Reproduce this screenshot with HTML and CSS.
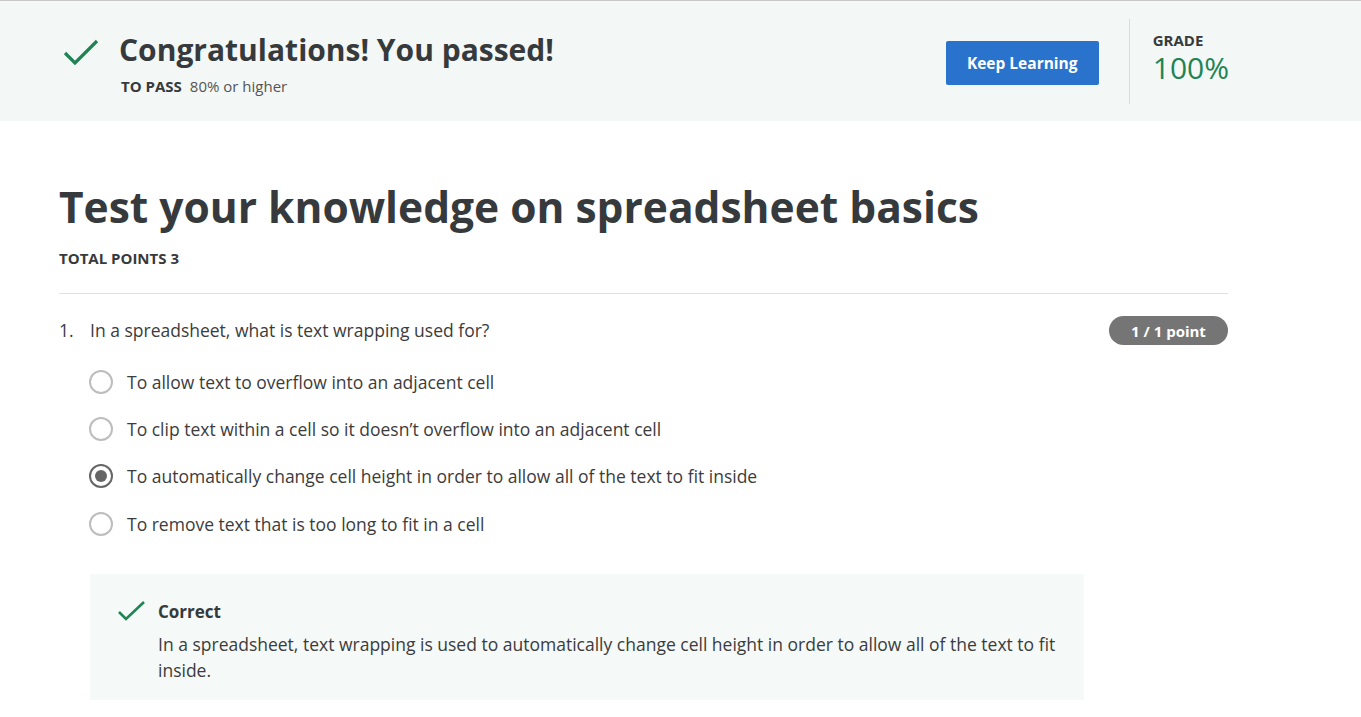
FILE: index.html
```html
<!DOCTYPE html>
<html lang="en">
<head>
<meta charset="utf-8">
<title>Quiz result</title>
<link rel="stylesheet" href="styles.css">
</head>
<body>
<header class="banner">
  <div class="banner-inner">
    <div class="banner-left">
      <svg class="banner-check" width="40" height="30" viewBox="0 0 40 30"><path d="M6 14 L16 24 L38 2" fill="none" stroke="#1f8354" stroke-width="3.2"/></svg>
      <div class="banner-text">
        <h1 class="banner-title">Congratulations! You passed!</h1>
        <div class="banner-sub"><span class="label">TO PASS</span><span class="val">80% or higher</span></div>
      </div>
    </div>
    <div class="banner-right">
      <button class="btn">Keep Learning</button>
      <div class="vdivider"></div>
      <div class="grade">
        <div class="label">GRADE</div>
        <div class="grade-val">100%</div>
      </div>
    </div>
  </div>
</header>
<main class="main">
  <h2 class="quiz-title">Test your knowledge on spreadsheet basics</h2>
  <div class="total">TOTAL POINTS 3</div>
  <hr class="rule">
  <section class="question">
    <div class="q-head">
      <div class="q-text"><span class="q-num">1.</span><span>In a spreadsheet, what is text wrapping used for?</span></div>
      <div class="badge">1 / 1 point</div>
    </div>
    <ul class="options">
      <li class="option"><span class="radio"></span><span>To allow text to overflow into an adjacent cell</span></li>
      <li class="option"><span class="radio"></span><span>To clip text within a cell so it doesn’t overflow into an adjacent cell</span></li>
      <li class="option"><span class="radio checked"></span><span>To automatically change cell height in order to allow all of the text to fit inside</span></li>
      <li class="option"><span class="radio"></span><span>To remove text that is too long to fit in a cell</span></li>
    </ul>
    <div class="feedback">
      <svg class="fb-check" width="30" height="22" viewBox="0 0 30 22"><path d="M3 11 L10 18 L28 1" fill="none" stroke="#1f8354" stroke-width="2.6"/></svg>
      <div class="fb-body">
        <div class="fb-title">Correct</div>
        <div class="fb-text">In a spreadsheet, text wrapping is used to automatically change cell height in order to allow all of the text to fit inside.</div>
      </div>
    </div>
  </section>
</main>
</body>
</html>
```
FILE: styles.css
```css
* { box-sizing: border-box; }
html, body { margin: 0; padding: 0; }
body {
  font-family: "Open Sans", "Liberation Sans", sans-serif;
  color: #373a3c;
  background: #fff;
  border-top: 1px solid #c9c9c9;
}
.banner {
  background: #f3f8f7;
  height: 120px;
}
.banner-inner {
  display: flex;
  justify-content: space-between;
  padding: 0 0 0 59px;
  width: 1229px;
  height: 100%;
}
.banner-left {
  display: flex;
  align-items: flex-start;
  padding-top: 29px;
}
.banner-check { margin-top: 9px; width: 40px; flex: none; }
.banner-text { margin-left: 20px; }
.banner-title {
  margin: 0;
  font-size: 30px;
  font-weight: 700;
  line-height: 40px;
}
.banner-sub { margin-top: 6px; font-size: 15px; line-height: 20px; padding-left: 2px; }
.label { font-weight: 700; font-size: 15px; }
.banner-sub .val { margin-left: 8px; color: #555; }
.banner-right {
  display: flex;
  align-items: flex-start;
}
.btn {
  margin-top: 40px;
  width: 153px;
  height: 44px;
  background: #2a73cc;
  color: #fff;
  border: none;
  border-radius: 2px;
  font-family: inherit;
  font-size: 15.5px;
  font-weight: 700;
}
.vdivider {
  margin: 18px 0 0 30px;
  width: 1px;
  height: 85px;
  background: #dcdcdc;
}
.grade { margin: 29px 0 0 23px; }
.grade .label { line-height: 20px; display: block; }
.grade-val {
  color: #1f8354;
  font-size: 30px;
  line-height: 34px;
  margin-top: 1px;
}
.main { padding: 0 0 0 59px; width: 1228px; }
.quiz-title {
  margin: 58px 0 0;
  font-size: 42.5px;
  font-weight: 700;
  line-height: 56px;
}
.total {
  margin-top: 13px;
  font-size: 15px;
  font-weight: 700;
  line-height: 20px;
}
.rule {
  margin: 25px 0 0;
  border: none;
  border-top: 1px solid #e1e1e1;
}
.question { padding-top: 23px; }
.q-head { display: flex; justify-content: space-between; align-items: flex-start; }
.q-text { font-size: 17.5px; line-height: 26px; color: #3c3c3c; }
.q-num { display: inline-block; width: 31px; }
.badge {
  margin-top: -1px;
  background: #757575;
  color: #fff;
  font-size: 15px;
  font-weight: 700;
  height: 29px;
  width: 119px;
  border-radius: 15px;
  display: flex;
  align-items: center;
  justify-content: center;
}
.options { list-style: none; margin: 13px 0 0; padding: 0 0 0 30px; }
.option {
  display: flex;
  align-items: center;
  height: 47.3px;
  font-size: 17.5px;
  color: #3c3c3c;
}
.radio {
  width: 24px;
  height: 24px;
  border-radius: 50%;
  border: 2px solid #bdbdbd;
  margin-right: 14px;
  flex: none;
  display: flex;
  align-items: center;
  justify-content: center;
}
.radio.checked { border-color: #666; }
.radio.checked::after {
  content: "";
  width: 12px;
  height: 12px;
  border-radius: 50%;
  background: #666;
}
.feedback {
  margin: 27px 0 0 31px;
  width: 994px;
  background: #f5f9f8;
  display: flex;
  padding: 25px 28px 17px 26px;
}
.fb-check { flex: none; margin-top: 2px; }
.fb-body { margin-left: 12px; }
.fb-title { font-size: 17px; font-weight: 700; line-height: 26px; }
.fb-text { margin-top: 6px; font-size: 17.5px; line-height: 26px; color: #3c3c3c; }
```
